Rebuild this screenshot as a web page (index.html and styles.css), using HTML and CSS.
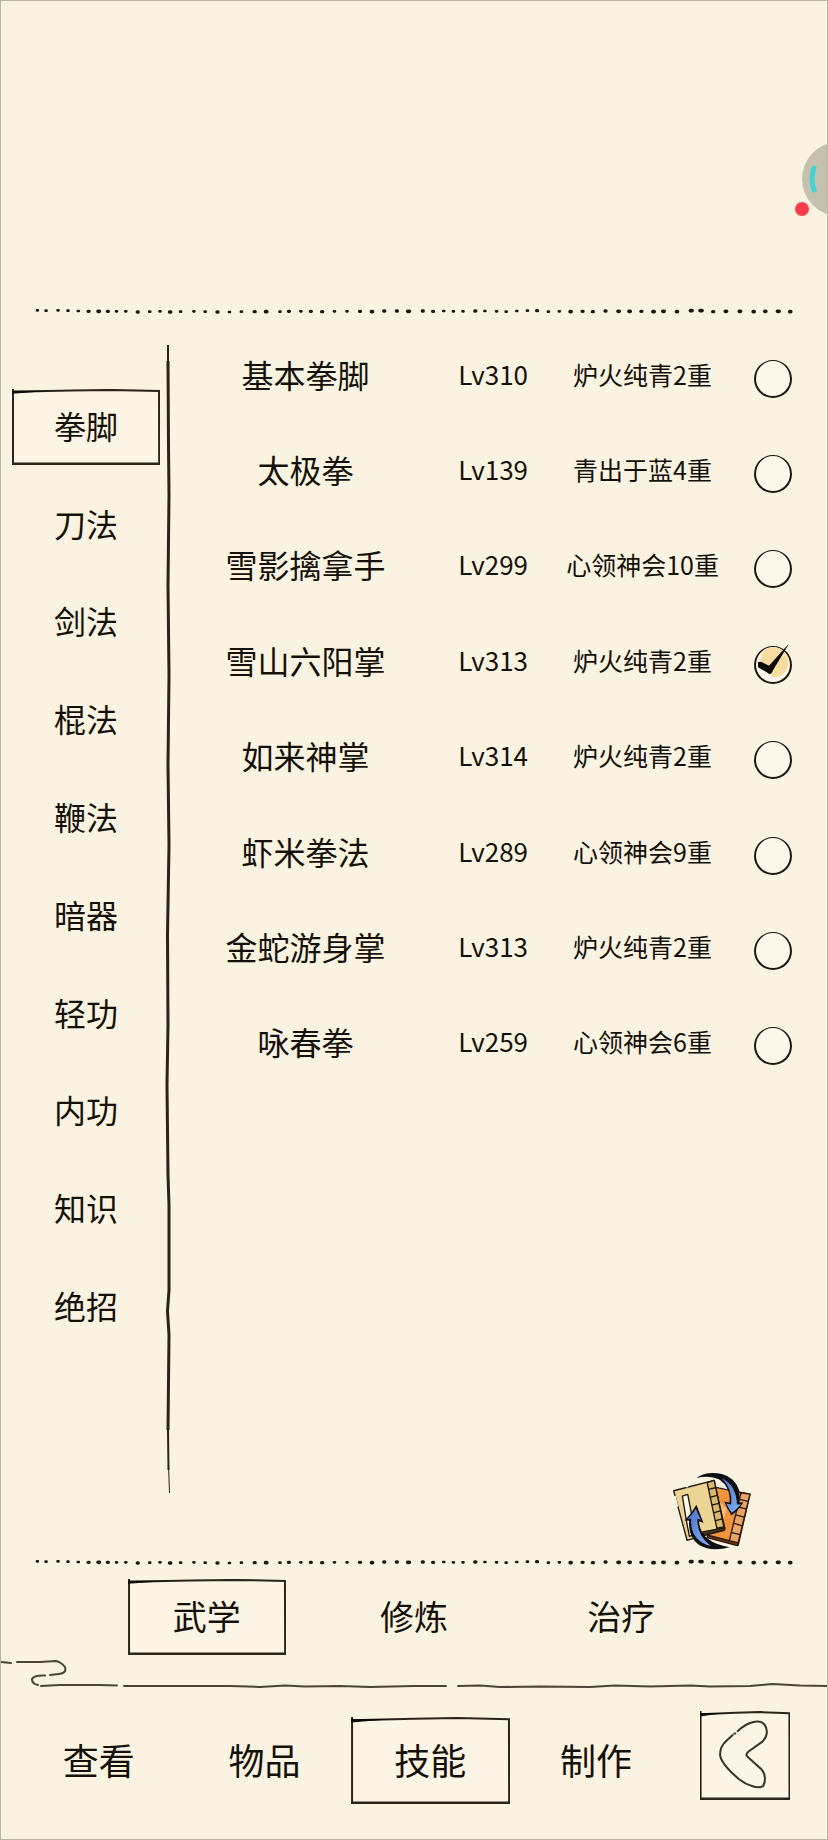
FILE: index.html
```html
<!DOCTYPE html>
<html lang="zh-CN">
<head>
<meta charset="UTF-8" />
<meta name="viewport" content="width=device-width, initial-scale=1" />
<title>技能</title>
<link rel="stylesheet" href="styles.css">
</head>
<body>
<svg class="defs" aria-hidden="true">
	<symbol id="frame" viewBox="0 0 150 80" preserveAspectRatio="none">
		<path class="paper" d="M1 3L149 1V79H1z" />
		<path class="ink" d="M1 0V80" />
		<path class="ink bold" d="M0 79H150" />
		<path class="ink" d="M0 3L60 1.5L100 1L149 2L149.200 80" />
		<path class="fill" d="M0 1.800L40 1.800L0 5z" />
	</symbol>
	<symbol id="dots" viewBox="0 0 2484 42">
		<path class="dot s" d="M107 19h3M133 20h3M169 19h3M199 20h3M230 21h3M345 22h3M373 22h3M445 23h3M476 22h3M538 23h3M578 22h3M612 23h3M685 24h3M721 23h3M837 23h3M900 22h3M1001 22h3M1039 22h3M1330 21h3M1359 22h3M1388 22h3M1454 21h3M1489 22h3M1518 23h3M1550 21h3M1582 20h3M1645 23h3M1678 22h3" />
		<path class="dot m" d="M261 22h3M319 22h3M409 24h3M506 24h4M649 24h3M761 23h3M864 22h3M930 22h3M964 23h3M1078 22h3M1151 21h3M1189 21h3M1267 21h3M1298 22h3M1425 21h3M1611 20h3M1748 22h3M1779 23h3M1817 21h3M1925 22h3M2141 23h3" />
		<path class="dot l" d="M291 22h4M795 23h4M1114 23h3M1223 22h5M1712 23h3M1856 22h4M1889 22h4M1961 23h4M1991 22h4M2032 23h3M2074 20h5M2103 20h6M2179 22h4M2221 22h4M2263 23h3M2298 22h3M2336 22h5M2373 23h3" />
	</symbol>
	<symbol id="tick" viewBox="0 0 120 120">
		<path class="gold" d="M24 40Q34 16 62 16Q90 18 104 44Q112 76 88 98Q72 108 56 104L50 92L24 62z" />
		<path class="fill" d="M15 60L24 59L48 71L106 7L104 12L60 85Q57 96 49 96Q34 86 15 76z" />
	</symbol>
</svg>

<div class="assist"><svg viewBox="0 0 26 74" aria-hidden="true"><path d="M12 26Q8 37 12 48" /></svg></div>
<span class="assist-dot"></span>

<header class="stage"></header>
<svg class="rule" viewBox="0 0 2484 42" aria-hidden="true"><use href="#dots" /></svg>

<main class="book">
	<nav class="side">
		<button type="button" class="tab on"><svg class="frame" aria-hidden="true"><use href="#frame" /></svg><span>拳脚</span></button>
		<button type="button" class="tab">刀法</button>
		<button type="button" class="tab">剑法</button>
		<button type="button" class="tab">棍法</button>
		<button type="button" class="tab">鞭法</button>
		<button type="button" class="tab">暗器</button>
		<button type="button" class="tab">轻功</button>
		<button type="button" class="tab">内功</button>
		<button type="button" class="tab">知识</button>
		<button type="button" class="tab">绝招</button>
	</nav>
	<svg class="divider" viewBox="0 0 10 1148" preserveAspectRatio="none" aria-hidden="true">
		<path class="ink bold" d="M5 16L5.500 100L6 150L5 240L6 330L5 420L6 500L4.500 590L5 680L4 740L5 830L6 860V945L4.500 966L6 990L5 1085" />
		<path class="ink" d="M5 0V100M5 1085L5.500 1125" />
		<path class="ink thin" d="M5.500 1120L6.500 1148" />
	</svg>
	<section class="list">
		<table class="skills">
			<tbody>
				<tr><th scope="row">基本拳脚</th><td class="lv">Lv310</td><td class="rank">炉火纯青2重</td><td><label class="pick"><input type="radio" name="skill" aria-label="基本拳脚" /><svg class="tick" aria-hidden="true"><use href="#tick" /></svg></label></td></tr>
				<tr><th scope="row">太极拳</th><td class="lv">Lv139</td><td class="rank">青出于蓝4重</td><td><label class="pick"><input type="radio" name="skill" aria-label="太极拳" /><svg class="tick" aria-hidden="true"><use href="#tick" /></svg></label></td></tr>
				<tr><th scope="row">雪影擒拿手</th><td class="lv">Lv299</td><td class="rank">心领神会10重</td><td><label class="pick"><input type="radio" name="skill" aria-label="雪影擒拿手" /><svg class="tick" aria-hidden="true"><use href="#tick" /></svg></label></td></tr>
				<tr><th scope="row">雪山六阳掌</th><td class="lv">Lv313</td><td class="rank">炉火纯青2重</td><td><label class="pick"><input type="radio" name="skill" aria-label="雪山六阳掌" checked /><svg class="tick" aria-hidden="true"><use href="#tick" /></svg></label></td></tr>
				<tr><th scope="row">如来神掌</th><td class="lv">Lv314</td><td class="rank">炉火纯青2重</td><td><label class="pick"><input type="radio" name="skill" aria-label="如来神掌" /><svg class="tick" aria-hidden="true"><use href="#tick" /></svg></label></td></tr>
				<tr><th scope="row">虾米拳法</th><td class="lv">Lv289</td><td class="rank">心领神会9重</td><td><label class="pick"><input type="radio" name="skill" aria-label="虾米拳法" /><svg class="tick" aria-hidden="true"><use href="#tick" /></svg></label></td></tr>
				<tr><th scope="row">金蛇游身掌</th><td class="lv">Lv313</td><td class="rank">炉火纯青2重</td><td><label class="pick"><input type="radio" name="skill" aria-label="金蛇游身掌" /><svg class="tick" aria-hidden="true"><use href="#tick" /></svg></label></td></tr>
				<tr><th scope="row">咏春拳</th><td class="lv">Lv259</td><td class="rank">心领神会6重</td><td><label class="pick"><input type="radio" name="skill" aria-label="咏春拳" /><svg class="tick" aria-hidden="true"><use href="#tick" /></svg></label></td></tr>
			</tbody>
		</table>
		<button type="button" class="swap" aria-label="切换">
			<svg viewBox="95 60 245 245" aria-hidden="true">
				<defs>
					<linearGradient id="blue" x1="0" y1="0" x2="1" y2="1"><stop offset="0" stop-color="#4a6fc4" /><stop offset="1" stop-color="#86b4f6" /></linearGradient>
				</defs>
				<!-- back book -->
				<g stroke="#2b1708" stroke-width="4" stroke-linejoin="round">
					<path fill="#f3943d" d="M228 112L331 132L296 284L205 260z" />
					<path fill="#fbb877" stroke="none" d="M232 150L262 176L246 226z" />
					<path fill="#e9a765" d="M304 128L331 132L294 284L268 276z" />
					<path fill="none" d="M298 147L325 154M293 170L320 176M288 194L314 201M282 219L308 227M276 247L302 253" />
					<path fill="#6b3a14" d="M205 255L296 278L293 286L203 262z" />
				</g>
				<!-- front book -->
				<g stroke="#1d1508" stroke-width="4" stroke-linejoin="round">
					<path fill="#ecd594" d="M103 122L224 91L256 236L143 270z" />
					<path fill="#fff9e6" d="M129 138L145 133L168 252L150 258L141 212z" />
					<path fill="#d9b96f" d="M203 98L224 91L253 230L232 234z" />
					<path fill="none" d="M206 118L228 113M211 142L233 136M216 165L238 160M221 188L243 182M226 212L248 206" />
					<path fill="#4c3511" d="M190 245L256 232L254 240L192 256z" />
				</g>
				<path stroke="#fbf3e1" stroke-width="6" d="M106 138L114 170M140 110L146 108" />
				<!-- arrows -->
				<path fill="#0d0d12" d="M171 84Q200 62 247 72Q286 82 299 122V157L311 156Q298 180 275 195Q262 175 254 154L270 157Q274 112 238 88Q210 74 171 84z" />
				<path fill="url(#blue)" d="M246 84Q290 104 292 163L304 162Q290 178 277 188Q266 174 260 160L275 163Q280 118 246 84z" />
				<path fill="#0d0d12" d="M171 164L192 218L179 213Q181 275 270 291Q215 305 179 284Q146 262 149 212L136 211Q156 190 171 164z" />
				<path fill="url(#blue)" d="M169 176L184 209L174 206Q172 256 214 287Q152 272 155 206L145 206Q160 192 169 176z" />
			</svg>
		</button>
	</section>
</main>

<svg class="rule" viewBox="0 0 2484 42" aria-hidden="true"><use href="#dots" /></svg>
<nav class="sub">
	<button type="button" class="tab on"><svg class="frame" aria-hidden="true"><use href="#frame" /></svg><span>武学</span></button>
	<button type="button" class="tab">修炼</button>
	<button type="button" class="tab">治疗</button>
</nav>

<svg class="cloud" viewBox="0 0 828 48" aria-hidden="true">
	<path class="gap" d="M0 0H1V48H0zM827 0H828V48H827z" />
	<path class="ink line" d="M0 22L11 23M17 22H40L56 21Q61 22 65 27Q67 33 59 34L50 35M45 35.500Q34 35 32 39Q32 44 38 45M41 46L60 45H100L117 45.500M124 46H230L260 47L285 45.500L305 46.500L340 46L370 47L414 46H446M458 46L480 45.500L500 47L540 46.500L590 47L615 45.500L650 46.500L690 45.500L710 46.500L750 46L772 44L800 45.500L828 46" />
</svg>

<nav class="main-nav">
	<button type="button" class="tab">查看</button>
	<button type="button" class="tab">物品</button>
	<button type="button" class="tab on"><svg class="frame" aria-hidden="true"><use href="#frame" /></svg><span>技能</span></button>
	<button type="button" class="tab">制作</button>
	<button type="button" class="tab back on" aria-label="返回">
		<svg class="frame" aria-hidden="true"><use href="#frame" /></svg>
		<svg class="arrow" viewBox="860 455 267 263" aria-hidden="true"><path d="M972 514C1000 488 1035 478 1050 493C1064 510 1060 536 1040 549L1006 573Q993 583 1001 590L1042 627C1056 642 1054 665 1048 676C1035 688 1000 676 975 656C950 635 925 610 920 588C918 566 926 554 937 544L957 526M962 521h3" /></svg>
	</button>
</nav>
</body>
</html>
```

FILE: styles.css
```css
*{
	box-sizing: border-box;
}
body{
	position: relative;
	margin: 0;
	border: 1px solid #bdb5a4;
	overflow-x: hidden;
	background: #fbf3e1;
	color: #15110a;
	font-family: "Noto Sans CJK SC", sans-serif;
	font-size: 32px;
	line-height: 40px;
}
button{
	margin: 0;
	border: 0;
	padding: 0;
	background: none;
	color: inherit;
	font: inherit;
	cursor: pointer;
}
svg{
	display: block;
}
.defs{
	position: absolute;
	width: 0;
	height: 0;
}

/* brush strokes */
.ink{
	fill: none;
	stroke: #2a2519;
	stroke-width: 2px;
	vector-effect: non-scaling-stroke;
}
.bold{
	stroke-width: 3px;
}
.thin{
	stroke-width: 1px;
}
.line{
	stroke: #4a4536;
	stroke-linecap: round;
}
.fill{
	fill: #0e0b06;
}
.paper{
	fill: #fcf4e4;
}
.gold{
	fill: #f8dca0;
}
.gap{
	fill: #fbf3e1;
}
.dot{
	fill: none;
	stroke: #1c180f;
	stroke-linecap: round;
}
.s{
	stroke-width: 8px;
}
.m{
	stroke-width: 10px;
}
.l{
	stroke-width: 11px;
}

/* floating ball at the screen edge */
.assist{
	position: absolute;
	top: 141px;
	right: 0;
	width: 25px;
	height: 74px;
	overflow: hidden;
}
.assist::before{
	content: "";
	position: absolute;
	top: 0;
	left: 0;
	width: 74px;
	height: 74px;
	border-radius: 50%;
	background: #c6c0af;
}
.assist svg{
	position: relative;
	width: 26px;
	height: 74px;
	fill: none;
	stroke: #45d3d3;
	stroke-width: 5px;
	stroke-linecap: round;
}
.assist-dot{
	position: absolute;
	top: 201px;
	right: 18px;
	width: 14px;
	height: 14px;
	border-radius: 50%;
	background: #f73d4c;
}

.stage{
	height: 303px;
}
.rule{
	width: 100%;
	height: auto;
}
.book{
	display: grid;
	grid-template-columns: 160px 14px 1fr;
	min-height: 1237px;
	padding-top: 10px;
}

.tab{
	position: relative;
	display: flex;
	align-items: center;
	justify-content: center;
	padding-bottom: 2px;
}
.tab span{
	position: relative;
}
.frame{
	position: absolute;
	inset: 0;
	width: 100%;
	height: 100%;
}

.side{
	display: flex;
	flex-direction: column;
	justify-content: space-between;
	height: 956px;
	margin-top: 61px;
	padding: 0 1px 0 11px;
}
.side .tab{
	height: 76px;
	padding-bottom: 4px;
}
.divider{
	width: 10px;
	height: 1148px;
	margin: 17px 0 0 2px;
}

.list{
	display: flex;
	flex-direction: column;
	padding-left: 16px;
}
.skills{
	width: 100%;
	height: 763px;
	border-collapse: collapse;
	table-layout: fixed;
	text-align: center;
}
.skills th, .skills td{
	padding: 0 0 4px;
	white-space: nowrap;
}
.skills th{
	width: 36%;
	font-weight: normal;
}
.skills .lv{
	width: 23%;
	font-size: 26px;
}
.skills .rank{
	width: 24%;
	font-size: 25px;
}
.pick{
	position: relative;
	display: block;
	width: 38px;
	margin: 10px auto 0;
}
.pick input{
	appearance: none;
	display: block;
	width: 38px;
	height: 38px;
	margin: 0;
	border: 2px solid #1c180f;
	border-top-width: 1px;
	border-radius: 50%;
	background: #fdf7ea;
}
.tick{
	display: none;
	position: absolute;
	top: -4px;
	left: -1px;
	width: 40px;
	height: 40px;
	pointer-events: none;
}
.pick input:checked + .tick{
	display: block;
}
.swap{
	align-self: flex-end;
	margin: auto 74px 3px 0;
}
.swap svg{
	width: 82px;
	height: 82px;
}

.sub{
	display: grid;
	grid-template-columns: repeat(3, 1fr);
	padding: 10px 102px 0;
	font-size: 34px;
}
.sub .tab{
	width: 158px;
	height: 76px;
	justify-self: center;
}
.cloud{
	position: relative;
	width: calc(100% + 2px);
	margin: -15px -1px 0;
	pointer-events: none;
}

.main-nav{
	display: grid;
	grid-template-columns: repeat(4, 1fr) 111px;
	align-items: end;
	padding: 23px 37px 35px 15px;
	font-size: 36px;
}
.main-nav .tab{
	width: 159px;
	height: 87px;
	justify-self: center;
}
.main-nav .back{
	width: 90px;
	height: 89px;
	margin-bottom: 4px;
	padding: 0;
	justify-self: end;
}
.arrow{
	position: relative;
	width: 90px;
	height: 89px;
	fill: none;
	stroke: #3a3528;
	stroke-width: 6px;
	stroke-linecap: round;
}
```
